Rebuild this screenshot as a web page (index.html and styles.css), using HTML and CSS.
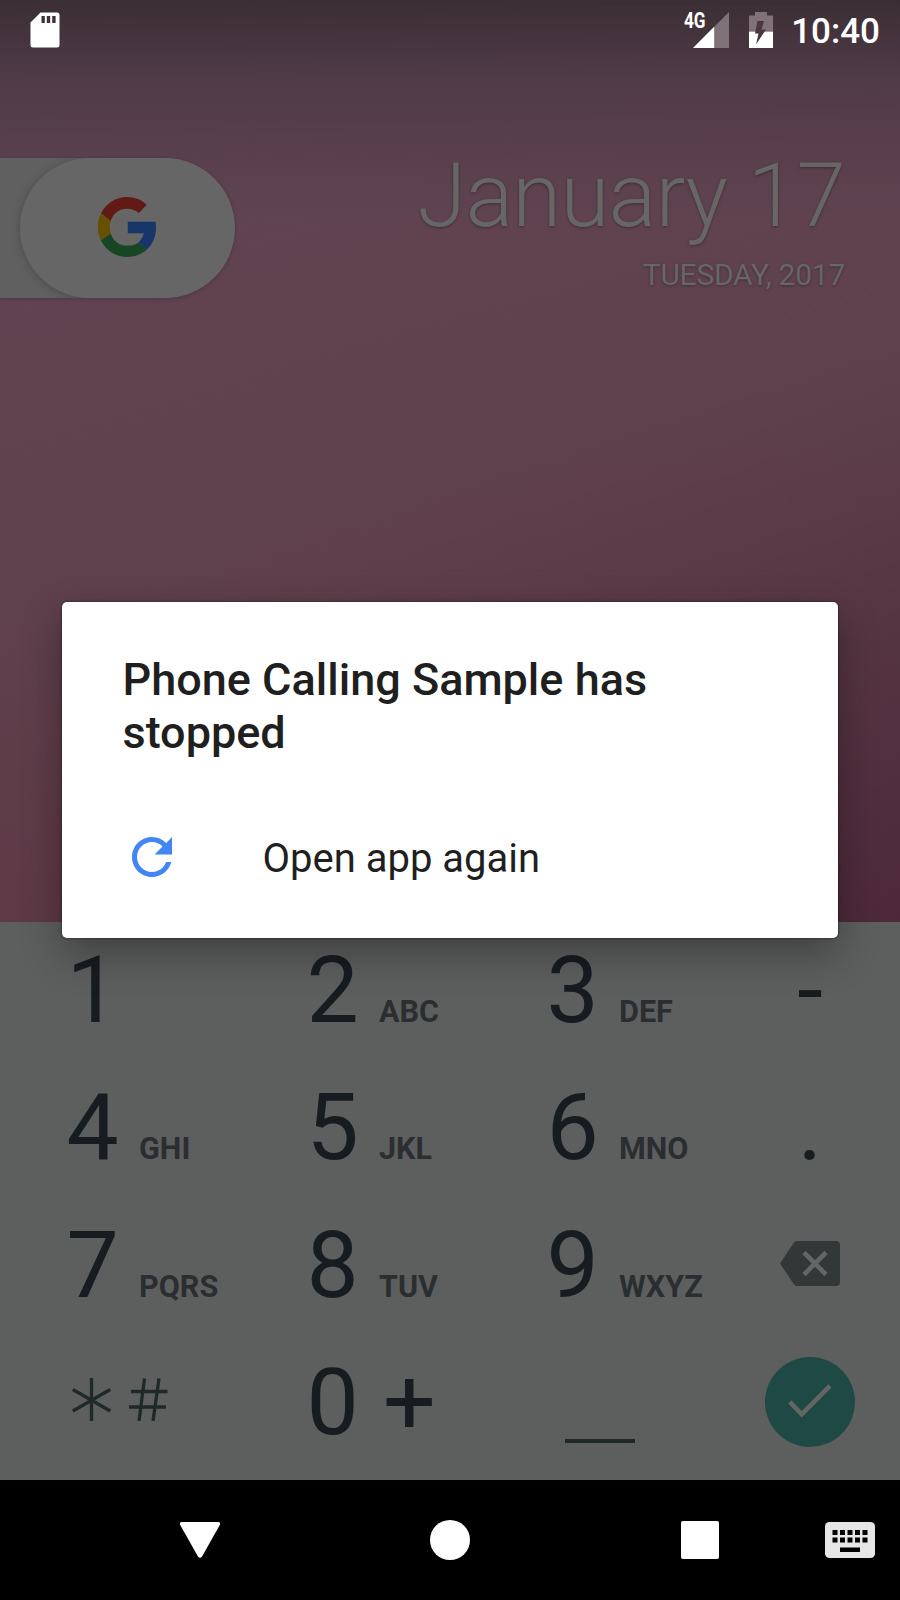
FILE: index.html
```
<!DOCTYPE html>
<html lang="en">
<head>
<meta charset="utf-8">
<title>Home screen</title>
<link rel="stylesheet" href="styles.css">
</head>
<body>
<div class="phone">
  <header class="status">
    <svg class="sd" width="30" height="36" viewBox="0 0 30 36"><path fill="#fff" fill-rule="evenodd" d="M10.500 .5H27q2.500 0 2.500 2.500V33q0 2.500-2.500 2.500H3Q.5 35.500.5 33V10.500ZM11.500 4v7h3.300V4ZM16.800 4v7h3.400V4ZM22.200 4v7h3.400V4Z"/></svg>
    <div class="signal">
      <svg width="36" height="36" viewBox="0 0 36 36"><path fill="#7f7278" d="M36 0V36H0Z"/><path fill="#fff" d="M21.200 14.800V36H0Z"/></svg>
      <span class="net">4G</span>
    </div>
    <svg class="battery" width="24" height="36" viewBox="0 0 24 36"><path fill="#7f7278" d="M6 0H18V3.500H24V36H0V3.500H6Z"/><path fill="#fff" d="M0 19.700H24V36H0Z"/><path fill="#4a363f" d="M8.500 9H15L12.500 17.500H17L7 32.500L9.500 21.500H6Z"/></svg>
    <time class="clock">10:40</time>
  </header>

  <section class="widget">
    <div class="tab"><div class="pill">
      <svg width="58" height="60" viewBox="2 2 44 44.700" preserveAspectRatio="none"><path fill="#611a15" d="M24 2C15.400 2 7.960 6.950 4.340 14.170L11.690 19.870C13.400 14.200 18.200 10.800 24 10.800C27.500 10.800 30.600 12 33 14L38.900 7.700C35 4.100 30.470 2 24 2Z"/><path fill="#19366a" d="M45.800 20.500H24.600V29H36.700C36 31.700 34.700 34.200 32.500 36L39 41.200C43.500 37.200 46 31.700 46 24.550Z"/><path fill="#685002" d="M11.700 29.100A14.500 14.500 0 0 1 11.700 19.870L4.340 14.170A22.500 22.500 0 0 0 4.200 34.400Z"/><path fill="#174624" d="M24 46.700C30 46.700 35.500 44.600 39.200 41.200L32.500 36C30.300 37.500 27.500 38.200 24.500 38.200C18.300 38.200 13.500 34.900 11.700 29.100L4.200 34.400C8 41.800 15.500 46.700 24 46.700Z"/></svg>
    </div></div>
    <div class="date">
      <div class="day">January 17</div>
      <div class="year">TUESDAY, 2017</div>
    </div>
  </section>

  <section class="dialog">
    <h1>Phone Calling Sample has stopped</h1>
    <div class="action">
      <svg width="40" height="40" viewBox="4 4 16 16"><path fill="#4285f4" d="M17.650 6.350C16.200 4.900 14.210 4 12 4c-4.420 0-7.990 3.580-7.990 8s3.570 8 7.990 8c3.730 0 6.840-2.550 7.730-6h-2.080c-.82 2.330-3.040 4-5.650 4-3.310 0-6-2.690-6-6s2.690-6 6-6c1.660 0 3.140.69 4.220 1.780L13 11h7V4l-2.350 2.350z"/></svg>
      <span>Open app again</span>
    </div>
  </section>

  <section class="keypad">
    <div class="key"><b>1</b></div>
    <div class="key"><b>2</b><i>ABC</i></div>
    <div class="key"><b>3</b><i>DEF</i></div>
    <div class="side"><b>-</b></div>
    <div class="key"><b>4</b><i>GHI</i></div>
    <div class="key"><b>5</b><i>JKL</i></div>
    <div class="key"><b>6</b><i>MNO</i></div>
    <div class="side"><b>.</b></div>
    <div class="key"><b>7</b><i>PQRS</i></div>
    <div class="key"><b>8</b><i>TUV</i></div>
    <div class="key"><b>9</b><i>WXYZ</i></div>
    <div class="side erase"><svg width="60" height="45" viewBox="0 0 60 45"><path fill="#323838" d="M17 0H56q4 0 4 4V41q0 4-4 4H17q-2 0-3-1.500L0 22.500L14 1.500Q15 0 17 0Z"/><path stroke="#646666" stroke-width="4.600" d="M24 11.500L46 33.500M46 11.500L24 33.500"/></svg></div>
    <div class="key symbols"><svg width="96" height="43" viewBox="0 0 96 43"><g fill="none" stroke="#20292a" stroke-width="3.300"><path d="M19.500 0V43M.8 11.500L38.300 33M38.300 11.500L.8 33"/><path d="M72.500 .5L67 43M87 .5L81 43M59 13.500H95.500M57 29H94"/></g></svg></div>
    <div class="key"><b>0</b><b class="plus">+</b></div>
    <div class="key blank"><span></span></div>
    <div class="side ok"><div class="round"><svg width="44" height="34" viewBox="0 0 44 34"><path fill="none" stroke="#666566" stroke-width="4.600" d="M1.800 18L13.700 30.300L42 1.800"/></svg></div></div>
  </section>

  <nav class="nav">
    <svg width="40" height="36" viewBox="0 0 40 36"><path fill="#fff" d="M2 0H38q3 0 1.800 3L22 34.500q-2 2.500-4 0L.2 3Q-1 0 2 0Z"/></svg>
    <span class="home"></span>
    <span class="recent"></span>
    <svg class="kbd" width="50" height="36" viewBox="0 0 50 36"><rect width="50" height="36" rx="4.500" fill="#e6e6e6"/><path stroke="#000" stroke-width="5" stroke-dasharray="5 2.500" d="M7.500 10.500H42.500M7.500 18H42.500"/><path fill="#000" d="M15 25.500H35V30H15Z"/></svg>
  </nav>
</div>
</body>
</html>
```
FILE: styles.css
```
* { box-sizing: border-box; }
body { margin: 0; background: #000; }
.phone {
  width: 900px;
  height: 1600px;
  display: flex;
  flex-direction: column;
  overflow: hidden;
  font-family: Roboto, "Noto Sans", sans-serif;
  background:
    linear-gradient(180deg, rgba(40,35,38,.66) 0, rgba(50,44,52,.36) 80px, rgba(60,50,60,0) 220px),
    linear-gradient(164deg, #604452 0, #614350 22%, #5f414d 32%, #5a3a4800 64%),
    linear-gradient(90deg, #5d3340, #542c3c 60%, #4c2838);
}
.status {
  height: 62px;
  display: flex;
  align-items: flex-start;
  padding: 12px 20px 0 30px;
}
.signal { position: relative; width: 36px; height: 36px; margin-left: auto; }
.net {
  position: absolute;
  left: -9px;
  top: -2px;
  font-size: 21.500px;
  line-height: 21px;
  font-weight: 700;
  color: #fff;
  transform: scaleX(.8);
  transform-origin: left;
}
.battery { margin-left: 20.500px; }
.clock { margin-left: 18px; color: #fff; font-size: 35px; line-height: 39px; font-weight: 500; }
.widget { display: flex; justify-content: space-between; height: 539.500px; padding: 95.500px 55px 0 0; }
.tab { width: 235px; height: 140px; padding-left: 20px; border-radius: 0 70px 70px 0; background: #606060; box-shadow: 0 1px 4px rgba(0,0,0,.2); overflow: hidden; }
.pill {
  width: 215px;
  height: 140px;
  border-radius: 70px;
  background: #666;
  box-shadow: 0 1px 10px rgba(0,0,0,.22);
  padding: 39.500px 0 0 77.500px;
}
.date { text-align: right; color: #666; text-shadow: 0 1px 3px rgba(0,0,0,.35); white-space: nowrap; }
.day { font-size: 89px; line-height: 105px; font-weight: 300; letter-spacing: -.8px; margin-top: -14.500px; }
.year { font-size: 30px; line-height: 35px; letter-spacing: -.25px; margin-top: 8.500px; }
.dialog {
  position: relative;
  width: 775.500px;
  height: 336px;
  margin-left: 62px;
  flex: none;
  padding: 51px 60px 0 60.500px;
  border-radius: 5px;
  background: #fff;
  box-shadow: 0 16px 42px rgba(0,0,0,.33), 0 0 3px rgba(0,0,0,.5);
  color: #1f1f1f;
}
.dialog h1 { margin: 0; font-size: 45px; line-height: 53px; font-weight: 500; }
.action { display: flex; align-items: center; margin-top: 75.500px; padding-left: 9.500px; height: 46px; font-size: 40px; }
.action span { margin-left: 90.500px; padding-top: 3px; }
.keypad {
  flex: none;
  height: 558.500px;
  margin-top: -16px;
  padding: 0 0 0 66px;
  display: grid;
  grid-template-columns: 240px 240px 198px 1fr;
  grid-template-rows: repeat(4, 137.500px);
  background: #5d5f5e;
  color: #161c20;
}
.key, .side { display: flex; align-items: baseline; line-height: 138px; white-space: nowrap; }
.key b { font-size: 93px; font-weight: 400; width: 73px; padding-left: .5px; }
.key i { font-style: normal; font-weight: 700; font-size: 30.600px; color: #2b2e31; }
.side { justify-content: center; padding-right: 24px; }
.side b { font-size: 93px; font-weight: 400; }
.key b.plus { width: auto; padding-left: 4px; }
.erase { align-items: flex-start; padding-top: 44.500px; }
.symbols { align-items: flex-start; padding: 44px 0 0 6px; }
.blank { align-items: flex-start; padding: 104.500px 0 0 19px; }
.blank span { width: 70px; height: 4px; background: #20292a; }
.ok { align-items: flex-start; padding-top: 23px; }
.round { width: 90px; height: 90px; border-radius: 50%; background: #1f4944; padding: 27px 0 0 23px; line-height: 0; }
.erase svg, .symbols svg { flex: none; }
.nav { flex: 1; display: flex; align-items: center; padding: 0 25px 0 180px; background: #000; }
.home { width: 40px; height: 40px; border-radius: 50%; background: #fff; margin-left: 210px; }
.recent { width: 38px; height: 38px; border-radius: 2px; background: #fff; margin-left: 211px; }
.kbd { margin-left: auto; }
```
